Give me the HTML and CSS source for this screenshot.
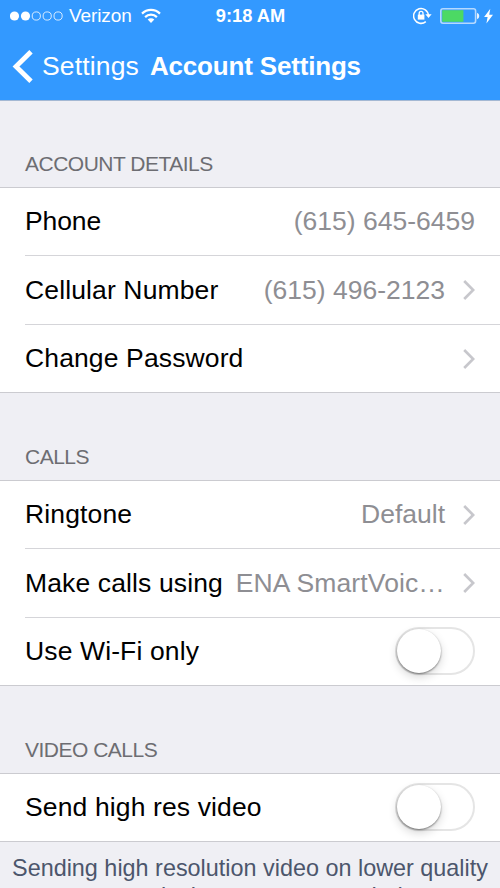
FILE: index.html
```html
<!DOCTYPE html>
<html lang="en">
<head>
<meta charset="utf-8">
<meta name="viewport" content="width=device-width">
<title>Account Settings</title>
<link rel="stylesheet" href="styles.css">
</head>
<body>
<header class="top">
  <div class="status">
    <div class="status-left">
      <svg class="signal" width="54" height="12" viewBox="0 0 54 12"><g fill="#fff"><circle cx="4.5" cy="6" r="4.6"/><circle cx="15.5" cy="6" r="4.6"/></g><g fill="none" stroke="#fff" stroke-width=".8"><circle cx="26.3" cy="6" r="4.1"/><circle cx="37.2" cy="6" r="4.1"/><circle cx="48.1" cy="6" r="4.1"/></g></svg>
      <span class="carrier">Verizon</span>
      <svg class="wifi" width="20" height="16" viewBox="0 0 20 16"><g fill="none" stroke="#fff" stroke-width="2.2"><path d="M1 5.6a12.8 12.8 0 0 1 18 0"/><path d="M4.1 9.1a8.4 8.4 0 0 1 11.8 0"/></g><path d="M10 14.9l-3.3-3.3a4.7 4.7 0 0 1 6.6 0z" fill="#fff"/></svg>
    </div>
    <span class="clock">9:18 AM</span>
    <div class="status-right">
      <svg width="19" height="18" viewBox="0 0 19 18"><path d="M12.8 14.6A7.4 7.4 0 1 1 15.4 8.5" fill="none" stroke="#fff" stroke-width="1.5"/><path d="M12.4 7.3h6.2l-3.1 3.8z" fill="#fff"/><rect x="4.8" y="7.6" width="6.6" height="5" fill="#fff"/><path d="M6.2 8V6.2a1.9 1.9 0 0 1 3.8 0V8" fill="none" stroke="#fff" stroke-width="1.3"/></svg>
      <svg class="battery" width="40" height="16" viewBox="0 0 40 16"><rect x=".8" y=".8" width="34.8" height="14.4" rx="2.2" fill="none" stroke="#b5d9ff" stroke-width="1.6"/><rect x="2.2" y="2.2" width="21.2" height="11.6" fill="#4cd964"/><path d="M37 4.8q2.3.8 2.3 3.2t-2.3 3.2z" fill="#e8f3ff"/></svg>
      <svg class="bolt" width="9" height="16" viewBox="0 0 9 16"><path d="M6.3.8L.1 9h3.5L2.4 15.4 9 6.8H5.2z" fill="#fff"/></svg>
    </div>
  </div>
  <nav class="nav">
    <svg class="back" width="21" height="33" viewBox="0 0 21 33"><path d="M19 1.7L4 16.5l15 14.8" fill="none" stroke="#fff" stroke-width="4.8"/></svg>
    <span class="back-label">Settings</span>
    <h1 class="title">Account Settings</h1>
  </nav>
</header>
<main>
  <h2 class="heading first">ACCOUNT DETAILS</h2>
  <section class="group">
    <div class="row"><span class="label phone">Phone</span><span class="value">(615) 645-6459</span></div>
    <div class="row"><span class="label">Cellular Number</span><span class="value">(615) 496-2123</span><svg class="chevron" width="12" height="20" viewBox="0 0 12 20"><path d="M1.2 1l9 9-9 9"/></svg></div>
    <div class="row"><span class="label">Change Password</span><svg class="chevron" width="12" height="20" viewBox="0 0 12 20"><path d="M1.2 1l9 9-9 9"/></svg></div>
  </section>
  <h2 class="heading">CALLS</h2>
  <section class="group">
    <div class="row"><span class="label">Ringtone</span><span class="value">Default</span><svg class="chevron" width="12" height="20" viewBox="0 0 12 20"><path d="M1.2 1l9 9-9 9"/></svg></div>
    <div class="row"><span class="label">Make calls using</span><span class="value carrier-name">ENA SmartVoic…</span><svg class="chevron" width="12" height="20" viewBox="0 0 12 20"><path d="M1.2 1l9 9-9 9"/></svg></div>
    <div class="row"><span class="label">Use Wi-Fi only</span><span class="switch"><span class="knob"></span></span></div>
  </section>
  <h2 class="heading">VIDEO CALLS</h2>
  <section class="group">
    <div class="row"><span class="label">Send high res video</span><span class="switch"><span class="knob"></span></span></div>
  </section>
  <p class="note">Sending high resolution video on lower quality<br>networks is not recommended.</p>
</main>
</body>
</html>
```

FILE: styles.css
```css
* { box-sizing: border-box; }
html, body { height: 888px; overflow: hidden; }
body {
  margin: 0;
  background: #efeff4;
  color: #000;
  font-family: "Liberation Sans", Arial, sans-serif;
}
svg { display: block; flex: none; }
.top { height: 101px; background: #3399ff; border-bottom: 1px solid #a4b8d3; color: #fff; }
.status { display: grid; grid-template-columns: 1fr auto 1fr; height: 32px; padding: 0 7px 0 10px; font-size: 19px; line-height: 32px; }
.status-left, .status-right { display: flex; align-items: center; }
.status-right { justify-content: flex-end; }
.carrier { margin-left: 5px; letter-spacing: -.1px; }
.wifi { margin-left: 9px; }
.clock { margin-right: 2px; font-weight: bold; font-size: 18.3px; }
.battery { margin-left: 8px; }
.bolt { margin-left: 4px; }
.nav { display: flex; align-items: center; height: 68px; padding-left: 12px; }
.back-label { margin-left: 9px; font-size: 26.5px; letter-spacing: .15px; }
.title { margin: 0 0 0 11px; font-size: 26px; font-weight: bold; letter-spacing: -.18px; white-space: nowrap; }
.heading { height: 87px; margin: 0; padding: 50px 25px 0; color: #6d6d72; font-size: 21px; font-weight: normal; line-height: 27px; letter-spacing: -.5px; }
.first { height: 86px; padding-top: 49px; }
.group { background: #fff; border-top: 1px solid #cbcbd0; border-bottom: 1px solid #cbcbd0; }
.row { display: flex; align-items: center; height: 67px; margin-left: 25px; padding-right: 25px; font-size: 26.5px; white-space: nowrap; }
.row + .row { height: 69px; border-top: 1px solid #d5d5d9; }
.row + .row + .row { height: 68px; }
.label { letter-spacing: .13px; }
.phone { letter-spacing: -.1px; }
.value { margin-left: auto; color: #8e8e93; }
.carrier-name { letter-spacing: .12px; }
.chevron { margin-left: 18px; fill: none; stroke: #c7c7cc; stroke-width: 2.7; }
.label + .chevron { margin-left: auto; }
.switch { position: relative; width: 80px; height: 48px; margin: 0 0 2px auto; border: 2px solid #e5e5e5; border-radius: 24px; }
.knob { position: absolute; left: 0; top: 0; width: 44px; height: 44px; border-radius: 50%; background: #fff; box-shadow: 0 1px 2px rgba(0,0,0,.45), 0 4px 10px rgba(0,0,0,.16); }
.note { margin: 0; padding-top: 12px; color: #4c566c; font-size: 23.4px; line-height: 28px; text-align: center; white-space: nowrap; }
```
